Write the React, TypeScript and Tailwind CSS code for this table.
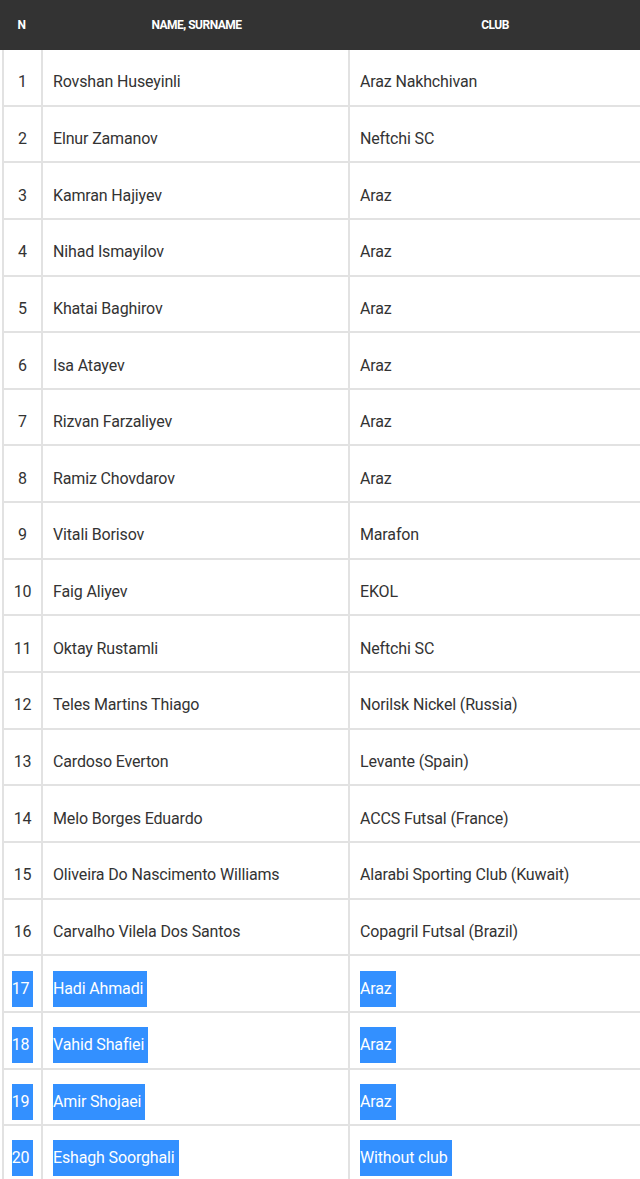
import React from "react";

const rows: [string, string, boolean?][] = [
  ["Rovshan Huseyinli", "Araz Nakhchivan"],
  ["Elnur Zamanov", "Neftchi SC"],
  ["Kamran Hajiyev", "Araz"],
  ["Nihad Ismayilov", "Araz"],
  ["Khatai Baghirov", "Araz"],
  ["Isa Atayev", "Araz"],
  ["Rizvan Farzaliyev", "Araz"],
  ["Ramiz Chovdarov", "Araz"],
  ["Vitali Borisov", "Marafon"],
  ["Faig Aliyev", "EKOL"],
  ["Oktay Rustamli", "Neftchi SC"],
  ["Teles Martins Thiago", "Norilsk Nickel (Russia)"],
  ["Cardoso Everton", "Levante (Spain)"],
  ["Melo Borges Eduardo", "ACCS Futsal (France)"],
  ["Oliveira Do Nascimento Williams", "Alarabi Sporting Club (Kuwait)"],
  ["Carvalho Vilela Dos Santos", "Copagril Futsal (Brazil)"],
  ["Hadi Ahmadi", "Araz", true],
  ["Vahid Shafiei", "Araz", true],
  ["Amir Shojaei", "Araz", true],
  ["Eshagh Soorghali", "Without club", true],
];

function Cell({ text, sel }: { text: string; sel?: boolean }) {
  if (!sel) return <span>{text}</span>;
  return <span className="bg-[#3390ff] text-white pr-[4px] py-[6px]">{text}</span>;
}

export default function App() {
  return (
    <div className="w-[640px] h-[1179px] overflow-hidden bg-white text-[#333]" style={{ fontFamily: "Roboto, 'Liberation Sans', sans-serif" }}>
      <div className="h-[50px] bg-[#333333] flex items-center text-white text-[12px] font-bold tracking-[-0.5px] uppercase">
        <div className="w-[43px] text-center">N</div>
        <div className="w-[307px] text-center">Name, Surname</div>
        <div className="flex-1 text-center">Club</div>
      </div>
      {rows.map(([name, club, sel], i) => (
        <div key={i} className="h-[56.65px] ml-[2px] flex border-b-[2px] border-[#e2e2e2] text-[16px] tracking-[-0.15px]">
          <div className="w-[41px] border-l-[2px] border-r-[2px] border-[#e2e2e2] flex items-center justify-center pt-[10px]">
            <Cell text={String(i + 1)} sel={sel} />
          </div>
          <div className="w-[307px] border-r-[2px] border-[#e2e2e2] flex items-center pl-[10px] pt-[10px]">
            <Cell text={name} sel={sel} />
          </div>
          <div className="flex-1 flex items-center pl-[10px] pt-[10px]">
            <Cell text={club} sel={sel} />
          </div>
        </div>
      ))}
    </div>
  );
}
